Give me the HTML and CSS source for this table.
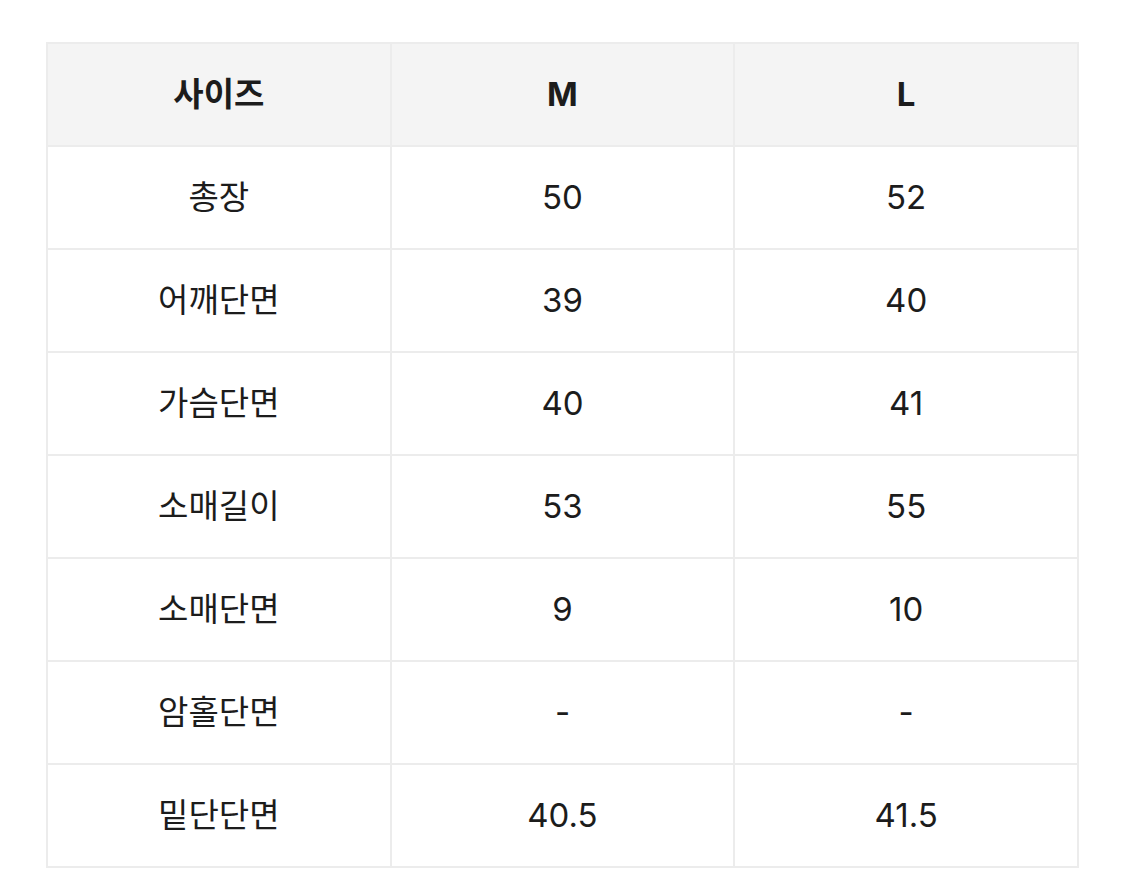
FILE: index.html
```html
<!DOCTYPE html>
<html lang="ko">
<head>
<meta charset="utf-8">
<link rel="stylesheet" href="styles.css">
</head>
<body>
<table class="size-table">
  <thead>
    <tr><th>사이즈</th><th>M</th><th>L</th></tr>
  </thead>
  <tbody>
    <tr><td>총장</td><td>50</td><td>52</td></tr>
    <tr><td>어깨단면</td><td>39</td><td>40</td></tr>
    <tr><td>가슴단면</td><td>40</td><td>41</td></tr>
    <tr><td>소매길이</td><td>53</td><td>55</td></tr>
    <tr><td>소매단면</td><td>9</td><td>10</td></tr>
    <tr><td>암홀단면</td><td>-</td><td>-</td></tr>
    <tr><td>밑단단면</td><td>40.5</td><td>41.5</td></tr>
  </tbody>
</table>
</body>
</html>
```
FILE: styles.css
```css
html, body {
  margin: 0;
  padding: 0;
  background: #ffffff;
}
body {
  padding: 42px 0 0 46px;
  font-family: Inter, "Noto Sans CJK KR", "Noto Sans", sans-serif;
  color: #1c1c1c;
}
.size-table {
  border-collapse: collapse;
  width: 1033px;
  table-layout: fixed;
}
.size-table th,
.size-table td {
  border: 2px solid #ececec;
  height: 101px;
  padding: 0;
  text-align: center;
  vertical-align: middle;
  font-size: 33px;
  line-height: 1;
}
.size-table th {
  background: #f4f4f4;
  font-weight: 700;
}
.size-table td {
  font-weight: 400;
}
```
